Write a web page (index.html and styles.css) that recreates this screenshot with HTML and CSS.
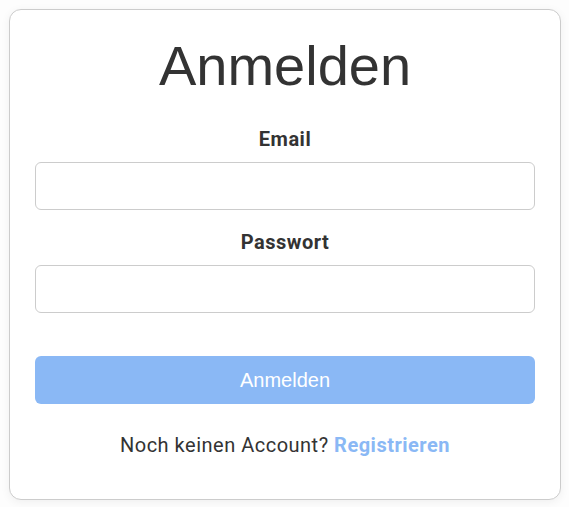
FILE: index.html
```html
<!DOCTYPE html>
<html lang="de">
<head>
<meta charset="utf-8">
<title>Anmelden</title>
<link rel="stylesheet" href="styles.css">
</head>
<body>
<div class="card">
  <h1 class="title">Anmelden</h1>
  <form class="form">
    <div class="field">
      <label class="label" for="email">Email</label>
      <input class="input" id="email" type="email">
    </div>
    <div class="field">
      <label class="label" for="pw">Passwort</label>
      <input class="input" id="pw" type="password">
    </div>
    <button class="btn" type="button">Anmelden</button>
  </form>
  <p class="footer">Noch keinen Account? <a class="link" href="#">Registrieren</a></p>
</div>
</body>
</html>
```
FILE: styles.css
```css
html, body { margin: 0; padding: 0; }
body {
  background: #fdfdfd;
  padding: 9px;
  font-family: Roboto, "Liberation Sans", sans-serif;
  color: #333;
}
.card {
  width: 552px;
  box-sizing: border-box;
  background: #fff;
  border: 1px solid #ccc;
  border-radius: 12px;
  box-shadow: 0 2px 10px rgba(0,0,0,0.06);
  padding: 24px 25px 43px;
}
.title {
  margin: 0;
  text-align: center;
  font-family: "Liberation Sans", Arial, sans-serif;
  font-weight: 400;
  font-size: 56px;
  line-height: 64px;
  color: #333;
}
.form { display: flex; flex-direction: column; margin-top: 30px; }
.field { display: flex; flex-direction: column; margin-bottom: 21px; }
.label {
  text-align: center;
  font-weight: 700;
  font-size: 20px;
  line-height: 22px;
  letter-spacing: 0.5px;
  margin-bottom: 12px;
  color: #333;
}
.input {
  height: 48px;
  box-sizing: border-box;
  border: 1px solid #ccc;
  border-radius: 6px;
  background: #fff;
  font-size: 16px;
  padding: 0 12px;
}
.btn {
  margin-top: 22px;
  height: 48px;
  border: none;
  border-radius: 6px;
  background: #8ab8f5;
  color: #fff;
  font-family: "Liberation Sans", Arial, sans-serif;
  font-size: 20px;
}
.footer {
  margin: 30px 0 0;
  text-align: center;
  font-size: 20px;
  line-height: 22px;
  letter-spacing: 0.5px;
  color: #333;
}
.link { color: #8ab8f5; font-weight: 700; text-decoration: none; }
```
